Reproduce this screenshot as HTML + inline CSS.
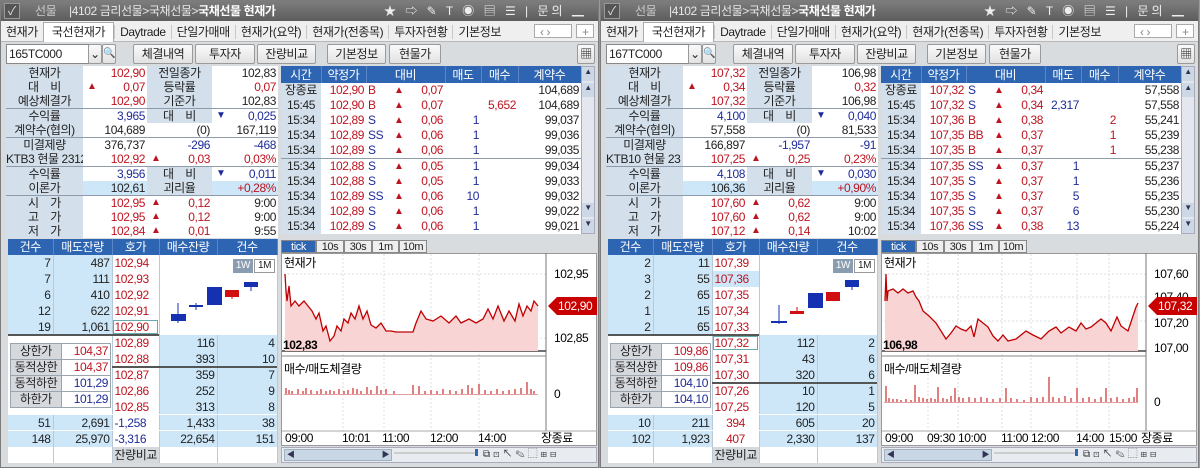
<!DOCTYPE html>
<html><head><meta charset="utf-8">
<style>
*{margin:0;padding:0;box-sizing:border-box}
body{width:1200px;height:468px;background:#9a9a9a;font-family:"Liberation Sans","Noto Sans CJK KR",sans-serif;font-size:12px;color:#222;position:relative;overflow:hidden;letter-spacing:-0.4px}
.p{position:absolute;top:0;width:599px;height:468px;background:#d9dcdf;border:1px solid #7c7c7c;overflow:hidden}
.a{position:absolute}
.tt{left:0;top:0;width:598px;height:20px;background:linear-gradient(#7d7d7d,#5d5d5d);color:#e8e8e8;font-size:12px;line-height:20px}
.tabs{left:0;top:20px;width:598px;height:21px;background:#efefef;border-bottom:1px solid #b8b8b8;line-height:20px;white-space:nowrap}
.tabs span{display:inline-block;padding:0 5px;border-left:1px solid #c8c8c8;height:14px;line-height:14px;margin-top:3px}
.tabs span.on{background:#fff;border:1px solid #aaa;border-bottom:none;height:20px;line-height:19px;margin-top:1px;padding:0 8px}
.btn{top:43px;height:20px;background:linear-gradient(#fafafa,#e2e2e2);border:1px solid #9a9a9a;border-radius:2px;text-align:center;line-height:18px}
table{border-collapse:collapse;table-layout:fixed;position:absolute}
td{padding:0 2px;white-space:nowrap;overflow:hidden;text-align:right}
.info td{height:14px;line-height:14px}
.L{background:#d3dfea;text-align:center!important}
.w{background:#fff}
.lb{background:#cde7f8}
.r{color:#bd1420}.b{color:#1f2b99}
.ar{float:left;font-size:10px;margin-left:2px}
.sp td{border-top:1px solid #8d9bab}
.tr td{height:15px;line-height:15px;background:#fff}
.tr th{height:17px;background:#2d65b3;color:#fff;font-weight:normal;border-right:1px solid #5a86c8}
.tr td.t{background:#d3dfea;text-align:center}
.ob td{height:16px;line-height:16px;border-right:1px solid #b9c9d6}
.ob th{height:16px;line-height:16px;background:#2d65b3;color:#fff;font-weight:normal;border-right:1px solid #5a86c8}
.sep{position:absolute;height:2px;background:#555}
.lim td{height:15.5px;line-height:15px;border:1px solid #9aa4ae}
.lim td.g{background:#d5d9dd;text-align:center}
.ctab{top:239px;height:13px;line-height:12px;font-size:11px;text-align:center;border:1px solid #888;background:#eee}
</style></head><body>

<!-- PANEL 1 -->
<div class="p" style="left:0">
 <div class="a tt"><span style="position:absolute;left:3px;top:2px;width:16px;height:16px;background:#555;border:1px solid #999"></span><span style="position:absolute;left:7px;top:0;color:#ddd">✓</span><span style="position:absolute;left:34px;color:#ccc">선물</span><span style="position:absolute;left:68px">|4102 금리선물&gt;국채선물&gt;<b style="color:#fff">국채선물 현재가</b></span><span style="position:absolute;left:383px;color:#eee;letter-spacing:3px">★ ⇨ ✎ T ◉ ▤ ☰ | 문의 ▁ ☐ ✕</span></div>
 <div class="a tabs"><span style="border:none">현재가</span><span class="on">국선현재가</span><span>Daytrade</span><span>단일가매매</span><span>현재가(요약)</span><span>현재가(전종목)</span><span>투자자현황</span><span>기본정보</span><span style="position:absolute;left:533px;top:0;width:38px;background:#fff;border:1px solid #aaa;color:#888">‹ ›</span><span style="position:absolute;left:575px;top:0;width:18px;background:#fff;border:1px solid #aaa;color:#888">+</span></div>
 <div class="a" style="left:5px;top:43px;width:83px;height:20px;background:#fff;border:1px solid #888;line-height:18px;padding-left:2px">165TC000</div>
 <div class="a btn" style="left:87px;width:14px">⌄</div><div class="a btn" style="left:101px;width:14px;font-size:10px">🔍</div>
 <div class="a btn" style="left:132px;width:60px">체결내역</div><div class="a btn" style="left:194px;width:60px">투자자</div><div class="a btn" style="left:256px;width:59px">잔량비교</div>
 <div class="a btn" style="left:326px;width:59px">기본정보</div><div class="a btn" style="left:388px;width:52px">현물가</div>
 <div class="a btn" style="left:576px;width:18px">▦</div>

 <table class="info" style="left:5px;top:65px;width:272px"><colgroup><col style="width:77px"><col style="width:64px"><col style="width:65px"><col style="width:66px"></colgroup>
 <tr><td class="L">현재가</td><td class="w r">102,90</td><td class="L">전일종가</td><td class="w">102,83</td></tr>
 <tr><td class="L">대　비</td><td class="w r"><span class="ar">▲</span>0,07</td><td class="L">등락률</td><td class="w r">0,07</td></tr>
 <tr><td class="L">예상체결가</td><td class="w r">102,90</td><td class="L">기준가</td><td class="w">102,83</td></tr>
 <tr class="sp"><td class="L">수익률</td><td class="w b">3,965</td><td class="L">대　비</td><td class="w b"><span class="ar">▼</span>0,025</td></tr>
 <tr><td class="L">계약수(협의)</td><td class="w">104,689</td><td class="w">(0)</td><td class="w">167,119</td></tr>
 <tr class="sp"><td class="L">미결제량</td><td class="w">376,737</td><td class="w b">-296</td><td class="w b">-468</td></tr>
 <tr><td class="L" style="text-align:left!important;padding:0">KTB3 현물 2312</td><td class="w r">102,92</td><td class="w r"><span class="ar">▲</span>0,03</td><td class="w r">0,03%</td></tr>
 <tr class="sp"><td class="L">수익률</td><td class="w b">3,956</td><td class="L">대　비</td><td class="w b"><span class="ar">▼</span>0,011</td></tr>
 <tr><td class="L">이론가</td><td class="lb">102,61</td><td class="L">괴리율</td><td class="lb r">+0,28%</td></tr>
 <tr class="sp"><td class="L">시　가</td><td class="w r">102,95</td><td class="w r"><span class="ar">▲</span>0,12</td><td class="w">9:00</td></tr>
 <tr><td class="L">고　가</td><td class="w r">102,95</td><td class="w r"><span class="ar">▲</span>0,12</td><td class="w">9:00</td></tr>
 <tr><td class="L">저　가</td><td class="w r">102,84</td><td class="w r"><span class="ar">▲</span>0,01</td><td class="w">9:55</td></tr>
 </table>

 <table class="tr" style="left:280px;top:65px;width:300px"><colgroup><col style="width:40px"><col style="width:45px"><col style="width:24px"><col style="width:55px"><col style="width:36px"><col style="width:37px"><col style="width:63px"></colgroup>
 <tr><th>시간</th><th>약정가</th><th colspan="2">대비</th><th>매도</th><th>매수</th><th>계약수</th></tr>
 <tr><td class="t">장종료</td><td class="r">102,90</td><td class="r" style="text-align:left">B</td><td class="r"><span class="ar">▲</span>0,07</td><td></td><td></td><td>104,689</td></tr>
 <tr><td class="t">15:45</td><td class="r">102,90</td><td class="r" style="text-align:left">B</td><td class="r"><span class="ar">▲</span>0,07</td><td></td><td class="r">5,652</td><td>104,689</td></tr>
 <tr><td class="t">15:34</td><td class="r">102,89</td><td class="b" style="text-align:left">S</td><td class="r"><span class="ar">▲</span>0,06</td><td class="b">1</td><td></td><td>99,037</td></tr>
 <tr><td class="t">15:34</td><td class="r">102,89</td><td class="b" style="text-align:left">SS</td><td class="r"><span class="ar">▲</span>0,06</td><td class="b">1</td><td></td><td>99,036</td></tr>
 <tr><td class="t">15:34</td><td class="r">102,89</td><td class="b" style="text-align:left">S</td><td class="r"><span class="ar">▲</span>0,06</td><td class="b">1</td><td></td><td>99,035</td></tr>
 <tr class="sp"><td class="t">15:34</td><td class="r">102,88</td><td class="b" style="text-align:left">S</td><td class="r"><span class="ar">▲</span>0,05</td><td class="b">1</td><td></td><td>99,034</td></tr>
 <tr><td class="t">15:34</td><td class="r">102,88</td><td class="b" style="text-align:left">S</td><td class="r"><span class="ar">▲</span>0,05</td><td class="b">1</td><td></td><td>99,033</td></tr>
 <tr><td class="t">15:34</td><td class="r">102,89</td><td class="b" style="text-align:left">SS</td><td class="r"><span class="ar">▲</span>0,06</td><td class="b">10</td><td></td><td>99,032</td></tr>
 <tr><td class="t">15:34</td><td class="r">102,89</td><td class="b" style="text-align:left">S</td><td class="r"><span class="ar">▲</span>0,06</td><td class="b">1</td><td></td><td>99,022</td></tr>
 <tr><td class="t">15:34</td><td class="r">102,89</td><td class="b" style="text-align:left">S</td><td class="r"><span class="ar">▲</span>0,06</td><td class="b">1</td><td></td><td>99,021</td></tr>
 </table>
 <div class="a" style="left:580px;top:65px;width:14px;height:168px;background:#e4e8ee;border:1px solid #aab"></div>
 <div class="a" style="left:581px;top:66px;width:12px;height:14px;background:#cdd8e6;font-size:8px;text-align:center;color:#335">▲</div>
 <div class="a" style="left:581px;top:82px;width:12px;height:14px;background:#cdd8e6;font-size:8px;text-align:center;color:#335">▲</div>
 <div class="a" style="left:581px;top:202px;width:12px;height:14px;background:#cdd8e6;font-size:8px;text-align:center;color:#335">▼</div>
 <div class="a" style="left:581px;top:218px;width:12px;height:14px;background:#cdd8e6;font-size:8px;text-align:center;color:#335">▼</div>

 <table class="ob" style="left:7px;top:238px;width:269px"><colgroup><col style="width:45px"><col style="width:59px"><col style="width:47px"><col style="width:58px"><col style="width:60px"></colgroup>
 <tr><th>건수</th><th>매도잔량</th><th>호가</th><th>매수잔량</th><th>건수</th></tr>
 <tr><td class="lb">7</td><td class="lb">487</td><td class="w r" style="text-align:left">102,94</td><td class="w" colspan="2" rowspan="5"></td></tr>
 <tr><td class="lb">7</td><td class="lb">111</td><td class="w r" style="text-align:left">102,93</td></tr>
 <tr><td class="lb">6</td><td class="lb">410</td><td class="w r" style="text-align:left">102,92</td></tr>
 <tr><td class="lb">12</td><td class="lb">622</td><td class="w r" style="text-align:left">102,91</td></tr>
 <tr><td class="lb">19</td><td class="lb">1,061</td><td class="w r" style="text-align:left;outline:1px solid #6aa;outline-offset:-2px">102,90</td></tr>
 <tr><td class="w" colspan="2" rowspan="5"></td><td class="w r" style="text-align:left">102,89</td><td class="lb">116</td><td class="lb">4</td></tr>
 <tr><td class="w r" style="text-align:left">102,88</td><td class="lb">393</td><td class="lb">10</td></tr>
 <tr><td class="w r" style="text-align:left">102,87</td><td class="lb">359</td><td class="lb">7</td></tr>
 <tr><td class="w r" style="text-align:left">102,86</td><td class="lb">252</td><td class="lb">9</td></tr>
 <tr><td class="w r" style="text-align:left">102,85</td><td class="lb">313</td><td class="lb">8</td></tr>
 <tr><td class="lb">51</td><td class="lb">2,691</td><td class="w b" style="text-align:left">-1,258</td><td class="lb">1,433</td><td class="lb">38</td></tr>
 <tr><td class="lb">148</td><td class="lb">25,970</td><td class="w b" style="text-align:left">-3,316</td><td class="lb">22,654</td><td class="lb">151</td></tr>
 <tr><td class="w"></td><td class="w"></td><td class="L" style="background:#d5d9dd">잔량비교</td><td class="w"></td><td class="w"></td></tr>
 </table>
 <div class="sep" style="left:7px;top:333px;width:151px"></div>
 <div class="sep" style="left:111px;top:365px;width:165px"></div>
 <div class="a" style="left:7px;top:413px;width:269px;height:1px;background:#fff"></div>
 <div class="a" style="left:7px;top:429px;width:269px;height:1px;background:#fff"></div>
 <table class="lim" style="left:9px;top:342px;width:100px"><colgroup><col style="width:51px"><col style="width:49px"></colgroup>
 <tr><td class="g">상한가</td><td class="w r">104,37</td></tr><tr><td class="g">동적상한</td><td class="w r">104,37</td></tr><tr><td class="g">동적하한</td><td class="w b">101,29</td></tr><tr><td class="g">하한가</td><td class="w b">101,29</td></tr></table>
 <div class="a" style="left:232px;top:258px;width:20px;height:14px;background:#8a9cb0;color:#fff;font-size:10px;text-align:center;line-height:14px">1W</div>
 <div class="a" style="left:253px;top:258px;width:21px;height:14px;background:#fff;border:1px solid #999;font-size:10px;text-align:center;line-height:12px">1M</div>

 <div class="a ctab" style="left:280px;width:35px;background:#2d65b3;color:#fff">tick</div>
 <div class="a ctab" style="left:315px;width:28px">10s</div><div class="a ctab" style="left:343px;width:28px">30s</div><div class="a ctab" style="left:371px;width:27px">1m</div><div class="a ctab" style="left:398px;width:28px">10m</div>
 <div class="a" style="left:280px;top:252px;width:316px;height:193px;background:#fff;border:1px solid #999"></div>
 <div class="a" style="left:280px;top:446px;width:316px;height:16px;background:#e8ecf0;border:1px solid #aab"></div>
 <div class="a" style="left:283px;top:448px;width:108px;height:12px;background:#c9d6e4;border:1px solid #a0b0c0;font-size:8px;line-height:10px;color:#335">&nbsp;◀<span style="float:right">▶&nbsp;</span></div>
 <div class="a" style="left:482px;top:447px;width:114px;height:14px;font-size:10px;letter-spacing:3px;line-height:14px;color:#333">⧉⊡↖✎⬚⊞⊟</div>

 <svg class="a" style="left:0;top:0" width="598" height="466" xmlns="http://www.w3.org/2000/svg" font-family="Liberation Sans, Noto Sans CJK KR, sans-serif" font-size="12">
  <line x1="177" y1="302" x2="177" y2="322" stroke="#1530b0"/><rect x="170" y="313" width="15" height="7" fill="#1530b0"/>
  <line x1="195" y1="302" x2="195" y2="309" stroke="#1530b0"/><rect x="188" y="304" width="14" height="2" fill="#1530b0"/>
  <rect x="206" y="286" width="15" height="18" fill="#1530b0"/>
  <line x1="231" y1="289" x2="231" y2="298" stroke="#d01010"/><rect x="224" y="289" width="14" height="7" fill="#d01010"/>
  <line x1="250" y1="281" x2="250" y2="290" stroke="#1530b0"/><rect x="243" y="281" width="14" height="5" fill="#1530b0"/>
  <g stroke="#ddd" stroke-dasharray="2,2"><line x1="342" y1="253" x2="342" y2="430"/><line x1="383" y1="253" x2="383" y2="430"/><line x1="430" y1="253" x2="430" y2="430"/><line x1="478" y1="253" x2="478" y2="430"/><line x1="283" y1="273" x2="545" y2="273"/><line x1="283" y1="337" x2="545" y2="337"/></g>
  <line x1="545" y1="252" x2="545" y2="430" stroke="#777"/>
  <line x1="281" y1="350" x2="545" y2="350" stroke="#444" stroke-width="1.5"/>
  <line x1="281" y1="355" x2="545" y2="355" stroke="#888"/>
  <line x1="281" y1="430" x2="596" y2="430" stroke="#aaa"/>
  <polygon fill="#f8d4d4" points="284,350 284,273 285,290 286,300 288,285 290,305 294,300 298,305 303,300 307,305 311,310 315,318 318,312 322,330 325,325 329,340 333,335 336,325 340,330 343,318 347,322 350,312 354,318 358,305 362,318 366,310 370,324 375,327 380,322 385,330 390,330 395,331 412,331 415,322 420,310 425,318 432,320 440,315 448,322 455,315 460,322 468,318 475,322 482,318 487,308 492,318 497,305 503,320 508,310 514,320 518,303 522,315 526,305 530,310 533,300 537,305 537,350"/>
  <polyline fill="none" stroke="#c00000" stroke-width="1.3" points="284,273 285,290 286,300 288,285 290,305 294,300 298,305 303,300 307,305 311,310 315,318 318,312 322,330 325,325 329,340 333,335 336,325 340,330 343,318 347,322 350,312 354,318 358,305 362,318 366,310 370,324 375,327 380,322 385,330 390,330 395,331 412,331 415,322 420,310 425,318 432,320 440,315 448,322 455,315 460,322 468,318 475,322 482,318 487,308 492,318 497,305 503,320 508,310 514,320 518,303 522,315 526,305 530,310 533,300 537,305"/>
  <text x="283" y="266">현재가</text>
  <text x="282" y="348" font-weight="bold">102,83</text>
  <text x="553" y="277">102,95</text><text x="553" y="341">102,85</text>
  <polygon points="547,305 556,296 596,296 596,314 556,314" fill="#c80000"/><text x="557" y="309" fill="#fff">102,90</text>
  <text x="283" y="372">매수/매도체결량</text><text x="553" y="397">0</text>
  <path stroke="#c00000" d="M285 393v-6M288 393v-4M291 393v-3M297 393v-5M302 393v-3M305 393v-6M310 393v-4M316 393v-3M320 393v-5M325 393v-3M329 393v-4M333 393v-3M338 393v-5M343 393v-3M347 393v-4M352 393v-6M356 393v-5M360 393v-3M366 393v-7M370 393v-4M376 393v-8M380 393v-4M385 393v-5M393 393v-3M412 393v-9M418 393v-8M424 393v-3M430 393v-4M436 393v-3M442 393v-5M449 393v-4M455 393v-3M461 393v-5M467 393v-9M471 393v-6M478 393v-10M484 393v-4M490 393v-3M496 393v-5M502 393v-3M508 393v-4M514 393v-5M520 393v-6M526 393v-12M530 393v-5M533 393v-3"/>
  <line x1="283" y1="393.5" x2="537" y2="393.5" stroke="#e0a0a0"/>
  <text x="284" y="441">09:00</text><text x="341" y="441">10:01</text><text x="381" y="441">11:00</text><text x="429" y="441">12:00</text><text x="477" y="441">14:00</text><text x="540" y="441">장종료</text>
  <line x1="393" y1="452" x2="475" y2="452" stroke="#ccc" stroke-width="2"/><rect x="474" y="448" width="3" height="7" fill="#2d65b3"/>
 </svg>
</div>

<!-- PANEL 2 -->
<div class="p" style="left:600px">
 <div class="a tt"><span style="position:absolute;left:3px;top:2px;width:16px;height:16px;background:#555;border:1px solid #999"></span><span style="position:absolute;left:7px;top:0;color:#ddd">✓</span><span style="position:absolute;left:34px;color:#ccc">선물</span><span style="position:absolute;left:68px">|4102 금리선물&gt;국채선물&gt;<b style="color:#fff">국채선물 현재가</b></span><span style="position:absolute;left:383px;color:#eee;letter-spacing:3px">★ ⇨ ✎ T ◉ ▤ ☰ | 문의 ▁ ☐ ✕</span></div>
 <div class="a tabs"><span style="border:none">현재가</span><span class="on">국선현재가</span><span>Daytrade</span><span>단일가매매</span><span>현재가(요약)</span><span>현재가(전종목)</span><span>투자자현황</span><span>기본정보</span><span style="position:absolute;left:533px;top:0;width:38px;background:#fff;border:1px solid #aaa;color:#888">‹ ›</span><span style="position:absolute;left:575px;top:0;width:18px;background:#fff;border:1px solid #aaa;color:#888">+</span></div>
 <div class="a" style="left:5px;top:43px;width:83px;height:20px;background:#fff;border:1px solid #888;line-height:18px;padding-left:2px">167TC000</div>
 <div class="a btn" style="left:87px;width:14px">⌄</div><div class="a btn" style="left:101px;width:14px;font-size:10px">🔍</div>
 <div class="a btn" style="left:132px;width:60px">체결내역</div><div class="a btn" style="left:194px;width:60px">투자자</div><div class="a btn" style="left:256px;width:59px">잔량비교</div>
 <div class="a btn" style="left:326px;width:59px">기본정보</div><div class="a btn" style="left:388px;width:52px">현물가</div>
 <div class="a btn" style="left:576px;width:18px">▦</div>

 <table class="info" style="left:5px;top:65px;width:272px"><colgroup><col style="width:77px"><col style="width:64px"><col style="width:65px"><col style="width:66px"></colgroup>
 <tr><td class="L">현재가</td><td class="w r">107,32</td><td class="L">전일종가</td><td class="w">106,98</td></tr>
 <tr><td class="L">대　비</td><td class="w r"><span class="ar">▲</span>0,34</td><td class="L">등락률</td><td class="w r">0,32</td></tr>
 <tr><td class="L">예상체결가</td><td class="w r">107,32</td><td class="L">기준가</td><td class="w">106,98</td></tr>
 <tr class="sp"><td class="L">수익률</td><td class="w b">4,100</td><td class="L">대　비</td><td class="w b"><span class="ar">▼</span>0,040</td></tr>
 <tr><td class="L">계약수(협의)</td><td class="w">57,558</td><td class="w">(0)</td><td class="w">81,533</td></tr>
 <tr class="sp"><td class="L">미결제량</td><td class="w">166,897</td><td class="w b">-1,957</td><td class="w b">-91</td></tr>
 <tr><td class="L" style="text-align:left!important;padding:0">KTB10 현물 23</td><td class="w r">107,25</td><td class="w r"><span class="ar">▲</span>0,25</td><td class="w r">0,23%</td></tr>
 <tr class="sp"><td class="L">수익률</td><td class="w b">4,108</td><td class="L">대　비</td><td class="w b"><span class="ar">▼</span>0,030</td></tr>
 <tr><td class="L">이론가</td><td class="lb">106,36</td><td class="L">괴리율</td><td class="lb r">+0,90%</td></tr>
 <tr class="sp"><td class="L">시　가</td><td class="w r">107,60</td><td class="w r"><span class="ar">▲</span>0,62</td><td class="w">9:00</td></tr>
 <tr><td class="L">고　가</td><td class="w r">107,60</td><td class="w r"><span class="ar">▲</span>0,62</td><td class="w">9:00</td></tr>
 <tr><td class="L">저　가</td><td class="w r">107,12</td><td class="w r"><span class="ar">▲</span>0,14</td><td class="w">10:02</td></tr>
 </table>

 <table class="tr" style="left:280px;top:65px;width:300px"><colgroup><col style="width:40px"><col style="width:45px"><col style="width:24px"><col style="width:55px"><col style="width:36px"><col style="width:37px"><col style="width:63px"></colgroup>
 <tr><th>시간</th><th>약정가</th><th colspan="2">대비</th><th>매도</th><th>매수</th><th>계약수</th></tr>
 <tr><td class="t">장종료</td><td class="r">107,32</td><td class="b" style="text-align:left">S</td><td class="r"><span class="ar">▲</span>0,34</td><td></td><td></td><td>57,558</td></tr>
 <tr><td class="t">15:45</td><td class="r">107,32</td><td class="b" style="text-align:left">S</td><td class="r"><span class="ar">▲</span>0,34</td><td class="b">2,317</td><td></td><td>57,558</td></tr>
 <tr><td class="t">15:34</td><td class="r">107,36</td><td class="r" style="text-align:left">B</td><td class="r"><span class="ar">▲</span>0,38</td><td></td><td class="r">2</td><td>55,241</td></tr>
 <tr><td class="t">15:34</td><td class="r">107,35</td><td class="r" style="text-align:left">BB</td><td class="r"><span class="ar">▲</span>0,37</td><td></td><td class="r">1</td><td>55,239</td></tr>
 <tr><td class="t">15:34</td><td class="r">107,35</td><td class="r" style="text-align:left">B</td><td class="r"><span class="ar">▲</span>0,37</td><td></td><td class="r">1</td><td>55,238</td></tr>
 <tr class="sp"><td class="t">15:34</td><td class="r">107,35</td><td class="b" style="text-align:left">SS</td><td class="r"><span class="ar">▲</span>0,37</td><td class="b">1</td><td></td><td>55,237</td></tr>
 <tr><td class="t">15:34</td><td class="r">107,35</td><td class="b" style="text-align:left">S</td><td class="r"><span class="ar">▲</span>0,37</td><td class="b">1</td><td></td><td>55,236</td></tr>
 <tr><td class="t">15:34</td><td class="r">107,35</td><td class="b" style="text-align:left">S</td><td class="r"><span class="ar">▲</span>0,37</td><td class="b">5</td><td></td><td>55,235</td></tr>
 <tr><td class="t">15:34</td><td class="r">107,35</td><td class="b" style="text-align:left">S</td><td class="r"><span class="ar">▲</span>0,37</td><td class="b">6</td><td></td><td>55,230</td></tr>
 <tr><td class="t">15:34</td><td class="r">107,36</td><td class="b" style="text-align:left">SS</td><td class="r"><span class="ar">▲</span>0,38</td><td class="b">13</td><td></td><td>55,224</td></tr>
 </table>
 <div class="a" style="left:580px;top:65px;width:14px;height:168px;background:#e4e8ee;border:1px solid #aab"></div>
 <div class="a" style="left:581px;top:66px;width:12px;height:14px;background:#cdd8e6;font-size:8px;text-align:center;color:#335">▲</div>
 <div class="a" style="left:581px;top:82px;width:12px;height:14px;background:#cdd8e6;font-size:8px;text-align:center;color:#335">▲</div>
 <div class="a" style="left:581px;top:202px;width:12px;height:14px;background:#cdd8e6;font-size:8px;text-align:center;color:#335">▼</div>
 <div class="a" style="left:581px;top:218px;width:12px;height:14px;background:#cdd8e6;font-size:8px;text-align:center;color:#335">▼</div>

 <table class="ob" style="left:7px;top:238px;width:269px"><colgroup><col style="width:45px"><col style="width:59px"><col style="width:47px"><col style="width:58px"><col style="width:60px"></colgroup>
 <tr><th>건수</th><th>매도잔량</th><th>호가</th><th>매수잔량</th><th>건수</th></tr>
 <tr><td class="lb">2</td><td class="lb">11</td><td class="w r" style="text-align:left">107,39</td><td class="w" colspan="2" rowspan="5"></td></tr>
 <tr><td class="lb">3</td><td class="lb">55</td><td class="lb r" style="text-align:left">107,36</td></tr>
 <tr><td class="lb">2</td><td class="lb">65</td><td class="w r" style="text-align:left">107,35</td></tr>
 <tr><td class="lb">1</td><td class="lb">15</td><td class="w r" style="text-align:left">107,34</td></tr>
 <tr><td class="lb">2</td><td class="lb">65</td><td class="w r" style="text-align:left">107,33</td></tr>
 <tr><td class="w" colspan="2" rowspan="5"></td><td class="w r" style="text-align:left;outline:1px solid #6aa;outline-offset:-2px">107,32</td><td class="lb">112</td><td class="lb">2</td></tr>
 <tr><td class="w r" style="text-align:left">107,31</td><td class="lb">43</td><td class="lb">6</td></tr>
 <tr><td class="w r" style="text-align:left">107,30</td><td class="lb">320</td><td class="lb">6</td></tr>
 <tr><td class="w r" style="text-align:left">107,26</td><td class="lb">10</td><td class="lb">1</td></tr>
 <tr><td class="w r" style="text-align:left">107,25</td><td class="lb">120</td><td class="lb">5</td></tr>
 <tr><td class="lb">10</td><td class="lb">211</td><td class="w r" style="text-align:center">394</td><td class="lb">605</td><td class="lb">20</td></tr>
 <tr><td class="lb">102</td><td class="lb">1,923</td><td class="w r" style="text-align:center">407</td><td class="lb">2,330</td><td class="lb">137</td></tr>
 <tr><td class="w"></td><td class="w"></td><td class="L" style="background:#d5d9dd">잔량비교</td><td class="w"></td><td class="w"></td></tr>
 </table>
 <div class="sep" style="left:7px;top:333px;width:151px"></div>
 <div class="sep" style="left:111px;top:381px;width:165px"></div>
 <div class="a" style="left:7px;top:413px;width:269px;height:1px;background:#fff"></div>
 <div class="a" style="left:7px;top:429px;width:269px;height:1px;background:#fff"></div>
 <table class="lim" style="left:9px;top:342px;width:100px"><colgroup><col style="width:51px"><col style="width:49px"></colgroup>
 <tr><td class="g">상한가</td><td class="w r">109,86</td></tr><tr><td class="g">동적상한</td><td class="w r">109,86</td></tr><tr><td class="g">동적하한</td><td class="w b">104,10</td></tr><tr><td class="g">하한가</td><td class="w b">104,10</td></tr></table>
 <div class="a" style="left:232px;top:258px;width:20px;height:14px;background:#8a9cb0;color:#fff;font-size:10px;text-align:center;line-height:14px">1W</div>
 <div class="a" style="left:253px;top:258px;width:21px;height:14px;background:#fff;border:1px solid #999;font-size:10px;text-align:center;line-height:12px">1M</div>

 <div class="a ctab" style="left:280px;width:35px;background:#2d65b3;color:#fff">tick</div>
 <div class="a ctab" style="left:315px;width:28px">10s</div><div class="a ctab" style="left:343px;width:28px">30s</div><div class="a ctab" style="left:371px;width:27px">1m</div><div class="a ctab" style="left:398px;width:28px">10m</div>
 <div class="a" style="left:280px;top:252px;width:316px;height:193px;background:#fff;border:1px solid #999"></div>
 <div class="a" style="left:280px;top:446px;width:316px;height:16px;background:#e8ecf0;border:1px solid #aab"></div>
 <div class="a" style="left:283px;top:448px;width:108px;height:12px;background:#c9d6e4;border:1px solid #a0b0c0;font-size:8px;line-height:10px;color:#335">&nbsp;◀<span style="float:right">▶&nbsp;</span></div>
 <div class="a" style="left:482px;top:447px;width:114px;height:14px;font-size:10px;letter-spacing:3px;line-height:14px;color:#333">⧉⊡↖✎⬚⊞⊟</div>

 <svg class="a" style="left:0;top:0" width="598" height="466" xmlns="http://www.w3.org/2000/svg" font-family="Liberation Sans, Noto Sans CJK KR, sans-serif" font-size="12">
  <line x1="178" y1="304" x2="178" y2="323" stroke="#1530b0"/><rect x="170" y="320" width="16" height="2" fill="#1530b0"/>
  <line x1="196" y1="306" x2="196" y2="311" stroke="#d01010"/><rect x="189" y="310" width="14" height="3" fill="#d01010"/>
  <rect x="207" y="292" width="15" height="15" fill="#1530b0"/>
  <rect x="225" y="291" width="14" height="9" fill="#d01010"/>
  <line x1="251" y1="279" x2="251" y2="289" stroke="#1530b0"/><rect x="244" y="279" width="14" height="7" fill="#1530b0"/>
  <g stroke="#ddd" stroke-dasharray="2,2"><line x1="327" y1="253" x2="327" y2="430"/><line x1="357" y1="253" x2="357" y2="430"/><line x1="401" y1="253" x2="401" y2="430"/><line x1="430" y1="253" x2="430" y2="430"/><line x1="476" y1="253" x2="476" y2="430"/><line x1="508" y1="253" x2="508" y2="430"/><line x1="283" y1="273" x2="545" y2="273"/><line x1="283" y1="296" x2="545" y2="296"/><line x1="283" y1="320" x2="545" y2="320"/></g>
  <line x1="545" y1="252" x2="545" y2="430" stroke="#777"/>
  <line x1="281" y1="350" x2="545" y2="350" stroke="#444" stroke-width="1.5"/>
  <line x1="281" y1="355" x2="545" y2="355" stroke="#888"/>
  <line x1="281" y1="430" x2="596" y2="430" stroke="#aaa"/>
  <polygon fill="#f8d4d4" points="284,350 284,300 285,273 286,300 287,290 292,288 297,292 302,288 307,292 312,290 315,296 318,300 322,310 328,315 335,322 340,330 345,338 350,332 355,325 360,328 365,330 370,325 373,336 377,318 382,322 387,326 392,335 397,340 402,334 407,340 415,338 425,330 432,334 440,338 448,330 455,326 460,332 468,326 475,330 480,322 485,328 490,326 500,318 505,322 510,330 516,316 520,325 527,330 532,315 535,306 537,302 537,350"/>
  <polyline fill="none" stroke="#c00000" stroke-width="1.3" points="284,300 285,273 286,300 287,290 292,288 297,292 302,288 307,292 312,290 315,296 318,300 322,310 328,315 335,322 340,330 345,338 350,332 355,325 360,328 365,330 370,325 373,336 377,318 382,322 387,326 392,335 397,340 402,334 407,340 415,338 425,330 432,334 440,338 448,330 455,326 460,332 468,326 475,330 480,322 485,328 490,326 500,318 505,322 510,330 516,316 520,325 527,330 532,315 535,306 537,302"/>
  <text x="283" y="266">현재가</text>
  <text x="282" y="348" font-weight="bold">106,98</text>
  <text x="553" y="277">107,60</text><text x="553" y="300">107,40</text><text x="553" y="326">107,20</text><text x="553" y="351">107,00</text>
  <polygon points="547,305 556,296 596,296 596,314 556,314" fill="#c80000"/><text x="557" y="309" fill="#fff">107,32</text>
  <text x="283" y="372">매수/매도체결량</text><text x="553" y="405">0</text>
  <path stroke="#c00000" d="M285 401v-16M288 401v-4M292 401v-3M296 401v-3M300 401v-2M305 401v-3M310 401v-2M314 401v-17M318 401v-5M322 401v-4M326 401v-3M330 401v-4M334 401v-3M337 401v-15M342 401v-4M346 401v-3M350 401v-6M354 401v-14M358 401v-5M362 401v-4M368 401v-5M374 401v-4M380 401v-5M386 401v-4M392 401v-3M399 401v-4M405 401v-14M410 401v-4M416 401v-3M423 401v-2M430 401v-5M436 401v-4M442 401v-5M448 401v-25M452 401v-5M458 401v-4M464 401v-6M470 401v-4M476 401v-14M482 401v-4M488 401v-5M494 401v-3M500 401v-5M505 401v-14M510 401v-4M516 401v-5M522 401v-3M528 401v-4M533 401v-5M536 401v-14"/>
  <line x1="283" y1="401.5" x2="537" y2="401.5" stroke="#e0a0a0"/>
  <text x="284" y="441">09:00</text><text x="326" y="441">09:30</text><text x="357" y="441">10:00</text><text x="400" y="441">11:00</text><text x="430" y="441">12:00</text><text x="475" y="441">14:00</text><text x="508" y="441">15:00</text><text x="540" y="441">장종료</text>
  <line x1="393" y1="452" x2="475" y2="452" stroke="#ccc" stroke-width="2"/><rect x="474" y="448" width="3" height="7" fill="#2d65b3"/>
 </svg>
</div>
</body></html>
